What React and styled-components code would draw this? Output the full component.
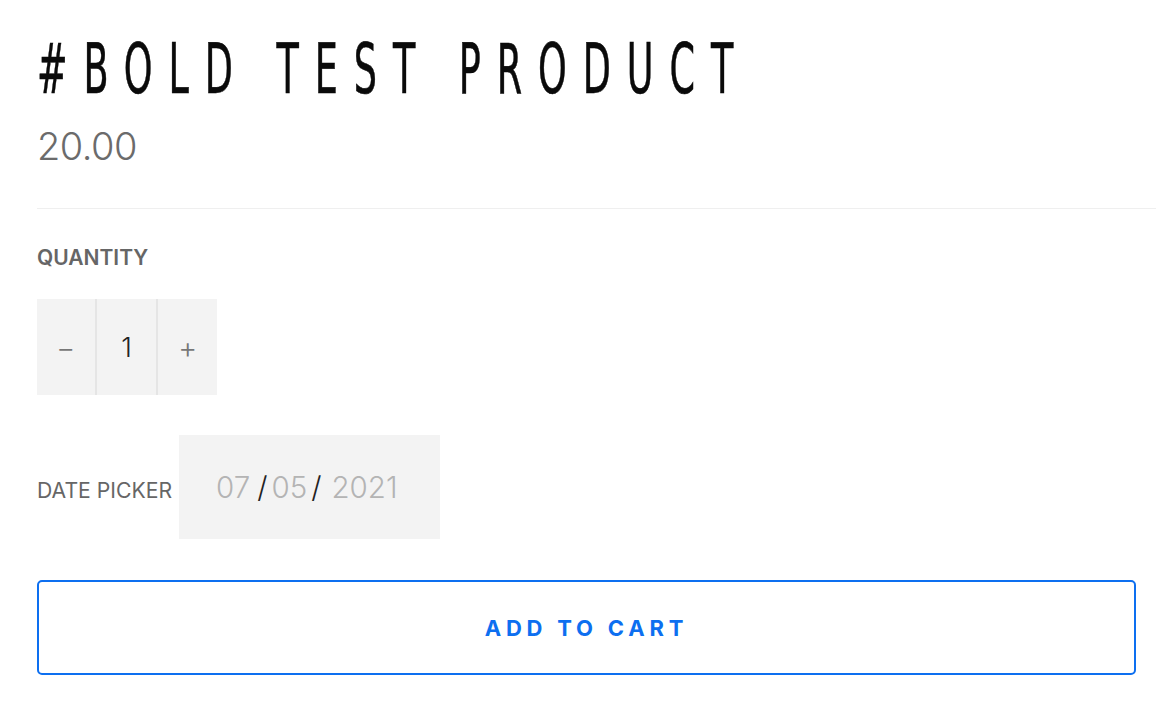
import React from "react";
import styled, { createGlobalStyle } from "styled-components";

const Global = createGlobalStyle`
  html, body { margin: 0; padding: 0; background: #fff; }
  body { font-family: "Inter", "Liberation Sans", sans-serif; }
`;

const Page = styled.div`
  padding: 24px 8px 0 37px;
`;

const Title = styled.h1`
  margin: 0;
  font-family: "DejaVu Sans Condensed", "Liberation Sans Narrow", sans-serif;
  font-weight: 400;
  font-size: 70px;
  line-height: 90px;
  letter-spacing: 27.5px;
  color: #0a0a0a;
  transform: scaleX(0.58);
  transform-origin: left center;
  white-space: nowrap;
  -webkit-text-stroke: 0.6px #0a0a0a;
`;

const Price = styled.div`
  margin-top: 10px;
  font-size: 38px;
  font-weight: 300;
  color: #6b6b6b;
  line-height: 44px;
  letter-spacing: -0.5px;
`;

const Rule = styled.hr`
  margin: 40px 0 0;
  border: 0;
  border-top: 1px solid #efefef;
`;

const Label = styled.div`
  margin-top: 36px;
  font-size: 21px;
  font-weight: 600;
  color: #666;
  line-height: 26px;
`;

const Stepper = styled.div`
  margin-top: 28px;
  display: flex;
  width: 180px;
  height: 96px;
  background: #f3f3f3;
`;

const Cell = styled.div`
  width: ${(p) => p.$w}px;
  display: flex;
  align-items: center;
  justify-content: center;
  font-size: ${(p) => (p.$value ? 27 : 29)}px;
  font-weight: 300;
  color: ${(p) => (p.$value ? "#222" : "#777")};
  border-left: ${(p) => (p.$first ? "none" : "2px solid #e5e5e5")};
`;

const DateRow = styled.div`
  margin-top: 40px;
  display: flex;
  align-items: center;
  gap: 7px;
`;

const DateLabel = styled.span`
  font-size: 21.2px;
  color: #666;
  padding-top: 6px;
`;

const DateBox = styled.div`
  width: 224px;
  height: 104px;
  background: #f3f3f3;
  padding-left: 37px;
  display: flex;
  align-items: center;
  font-size: 29.5px;
  font-weight: 300;
  color: #b4b4b4;
`;

const Slash = styled.span`
  color: #222;
  margin: 0 ${(p) => p.$r}px 0 ${(p) => p.$l}px;
`;

const CartButton = styled.button`
  margin-top: 41px;
  width: 1099px;
  height: 95px;
  background: #fff;
  border: 2px solid #0d6ff0;
  border-radius: 5px;
  color: #0d6ff0;
  font-family: "Inter", "Liberation Sans", sans-serif;
  font-size: 22px;
  font-weight: 700;
  letter-spacing: 4.8px;
  cursor: pointer;
`;

export default function App() {
  return (
    <>
      <Global />
      <Page>
        <Title>#BOLD TEST PRODUCT</Title>
        <Price>20.00</Price>
        <Rule />
        <Label>QUANTITY</Label>
        <Stepper>
          <Cell $w={59} $first>−</Cell>
          <Cell $w={61} $value>1</Cell>
          <Cell $w={60}>+</Cell>
        </Stepper>
        <DateRow>
          <DateLabel>DATE PICKER</DateLabel>
          <DateBox>
            07<Slash $l={7} $r={4}>/</Slash>05<Slash $l={4} $r={10}>/</Slash>2021
          </DateBox>
        </DateRow>
        <CartButton>ADD TO CART</CartButton>
      </Page>
    </>
  );
}
